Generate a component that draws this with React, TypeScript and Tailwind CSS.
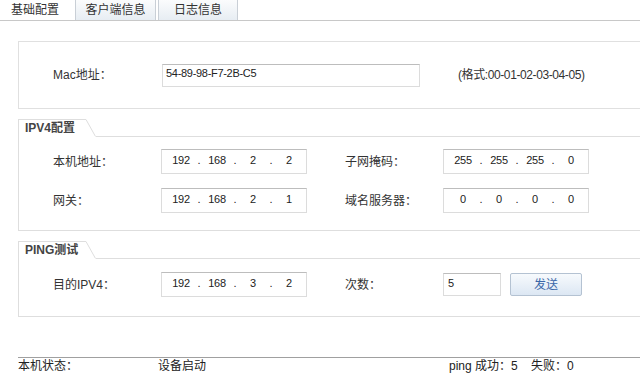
import React from 'react';

const font = "font-['Liberation_Sans','Noto_Sans_CJK_SC',sans-serif]";

function IpBox({ parts }: { parts: string[] }) {
  return (
    <div className="w-[146px] h-[25px] border border-[#dcdcdc] border-t-[#bdbdbd] bg-white flex items-center pl-[7px] pb-[3px] text-[#222] text-[11px] tracking-[-0.3px]">
      {parts.map((p, i) => (
        <React.Fragment key={i}>
          <span className="w-[24px] text-center">{p}</span>
          {i < 3 && <span className="w-[12px] text-center">.</span>}
        </React.Fragment>
      ))}
    </div>
  );
}

function Legend({ title }: { title: string }) {
  return (
    <div className="flex h-[18px]">
      <div className="w-[68px] border-t border-l border-[#dedede] pl-[6px] leading-[17px] font-bold text-[#444]">{title}</div>
      <svg width="10" height="18" className="shrink-0">
        <line x1="0" y1="0.5" x2="9.5" y2="17.5" stroke="#dedede" />
      </svg>
      <div className="flex-1 border-b border-[#dedede]" />
    </div>
  );
}

export default function App() {
  return (
    <div className={`w-[640px] h-[387px] bg-white overflow-hidden text-[12px] text-[#333] ${font}`}>
      {/* tabs */}
      <div className="flex h-[21px] border-b border-[#c8c8c8]">
        <div className="w-[74px] h-[20px] bg-white flex items-center justify-center pr-[4px]">基础配置</div>
        <div className="w-[81px] h-[20px] ml-[1px] border-l border-r border-[#c9cfd6] bg-gradient-to-b from-[#fbfcfd] to-[#e7edf3] flex items-center justify-center">客户端信息</div>
        <div className="w-[80px] h-[20px] ml-[2px] border-l border-r border-[#c9cfd6] bg-gradient-to-b from-[#fbfcfd] to-[#e7edf3] flex items-center justify-center">日志信息</div>
      </div>

      <div className="pl-[18px]">
        {/* mac */}
        <div className="mt-[20px] h-[68px] border-t border-l border-b border-[#e0e0e0] flex items-center pl-[34px]">
          <span className="w-[109px]">Mac地址：</span>
          <div className="w-[258px] h-[23px] border border-[#dcdcdc] border-t-[#bdbdbd] pl-[3px] pb-[3px] flex items-center text-[#222] text-[11px] tracking-[-0.3px]">54-89-98-F7-2B-C5</div>
          <span className="ml-[38px] text-[#333] tracking-[-0.4px]">(格式:00-01-02-03-04-05)</span>
        </div>

        {/* ipv4 */}
        <div className="mt-[10px]">
          <Legend title="IPV4配置" />
          <div className="h-[94px] border-l border-b border-[#dedede] pl-[34px] pt-[12px] flex flex-col gap-[14px]">
            <div className="flex items-center">
              <span className="w-[108px]">本机地址：</span>
              <IpBox parts={['192', '168', '2', '2']} />
              <span className="w-[98px] ml-[38px]">子网掩码：</span>
              <IpBox parts={['255', '255', '255', '0']} />
            </div>
            <div className="flex items-center">
              <span className="w-[108px]">网关：</span>
              <IpBox parts={['192', '168', '2', '1']} />
              <span className="w-[98px] ml-[38px]">域名服务器：</span>
              <IpBox parts={['0', '0', '0', '0']} />
            </div>
          </div>
        </div>

        {/* ping */}
        <div className="mt-[10px]">
          <Legend title="PING测试" />
          <div className="h-[58px] border-l border-b border-[#dedede] pl-[34px] pt-[13px]">
            <div className="flex items-center">
              <span className="w-[108px]">目的IPV4：</span>
              <IpBox parts={['192', '168', '3', '2']} />
              <span className="w-[98px] ml-[38px]">次数：</span>
              <div className="w-[58px] h-[23px] border border-[#dcdcdc] border-t-[#bdbdbd] pl-[4px] pb-[3px] flex items-center text-[#222] text-[11px]">5</div>
              <button className="ml-[9px] w-[72px] h-[23px] rounded-[2px] border border-[#b4c2d2] bg-gradient-to-b from-[#f7fafd] to-[#dce7f3] text-[#3a67a8] text-[12px] flex items-center justify-center">发送</button>
            </div>
          </div>
        </div>

        {/* status */}
        <div className="mt-[40px] border-t border-[#a0a0a0] flex h-[17px] items-center text-[#222]">
          <span className="w-[140px]">本机状态：</span>
          <span className="w-[291px]">设备启动</span>
          <span>ping 成功：5&nbsp;&nbsp;&nbsp;&nbsp;失败：0</span>
        </div>
      </div>
    </div>
  );
}
